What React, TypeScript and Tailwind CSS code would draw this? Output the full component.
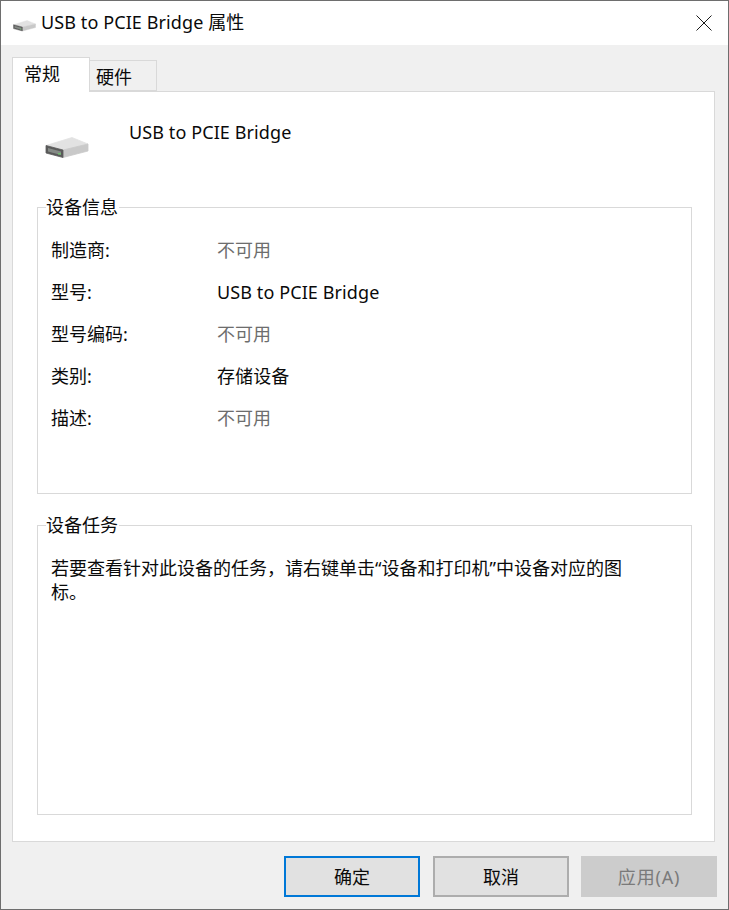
const font = { fontFamily: '"Noto Sans", "Noto Sans CJK SC", sans-serif' };

function DriveIcon({ className }: { className: string }) {
  return (
    <svg viewBox="0 0 44 22" className={className}>
      <path d="M1 8.5 L27 0.5 L43 7 L18 13 Z" fill="#e2e2e2" stroke="#e2e2e2" strokeWidth="0.8" strokeLinejoin="round" />
      <path d="M18 13 L43 7 L43 14 L18 20.5 Z" fill="#c9c9c9" stroke="#c9c9c9" strokeWidth="0.8" strokeLinejoin="round" />
      <path d="M1 8.5 L18 13 L18 20.5 L1 16 Z" fill="#5a5a5a" stroke="#5a5a5a" strokeWidth="0.8" strokeLinejoin="round" />
      <path d="M3 11 L16 14.5 L16 18 L3 14.5 Z" fill="#858a86" />
      <rect x="13" y="16" width="3" height="1.5" fill="#6fbf6f" />
    </svg>
  );
}

function GroupBox({
  title,
  className,
  children,
}: {
  title: string;
  className: string;
  children: React.ReactNode;
}) {
  return (
    <div className={`border border-[#d9d9d9] px-[13px] ${className}`}>
      <div className="-mt-[13px] -ml-[5px] w-fit bg-white pr-[1px] text-[18px] leading-[24px]">
        {title}
      </div>
      {children}
    </div>
  );
}

const rows = [
  { label: "制造商:", value: "不可用", muted: true },
  { label: "型号:", value: "USB to PCIE Bridge", muted: false },
  { label: "型号编码:", value: "不可用", muted: true },
  { label: "类别:", value: "存储设备", muted: false },
  { label: "描述:", value: "不可用", muted: true },
];

export default function App() {
  return (
    <div
      className="flex h-[910px] w-[729px] flex-col border border-[#6e6e6e] bg-[#f0f0f0] text-[#0a0a0a]"
      style={font}
    >
      {/* title bar */}
      <div className="flex h-[44px] shrink-0 items-center bg-white pl-[12px] pr-[16px]">
        <DriveIcon className="h-[12px] w-[23px] mt-[5px]" />
        <span className="ml-[5px] -mt-[3px] text-[18px] leading-[24px] tracking-[0.1px]">USB to PCIE Bridge 属性</span>
        <svg viewBox="0 0 16 16" className="ml-auto h-[16px] w-[16px] -mt-[1px]">
          <path d="M0.5 0.5 L15.5 15.5 M15.5 0.5 L0.5 15.5" stroke="#1a1a1a" strokeWidth="1" fill="none" />
        </svg>
      </div>

      {/* tabs */}
      <div className="mt-[12px] flex h-[34px] shrink-0 items-end pl-[11px]">
        <div className="relative z-10 -mb-[1px] h-[35px] w-[78px] border border-b-0 border-[#d9d9d9] bg-white pl-[11px] pt-[4px] text-[18px] leading-[24px]">
          常规
        </div>
        <div className="h-[31px] w-[67px] border border-l-0 border-[#d9d9d9] bg-[#f0f0f0] pl-[6px] pt-[4px] text-[18px] leading-[24px]">
          硬件
        </div>
      </div>

      {/* page */}
      <div className="ml-[11px] flex h-[751px] w-[703px] shrink-0 flex-col border border-[#d9d9d9] bg-white pl-[24px] pr-[22px]">
        <div className="flex h-[115px] shrink-0">
          <DriveIcon className="mt-[45px] ml-[8px] h-[22px] w-[44px] shrink-0" />
          <span className="ml-[40px] mt-[28px] text-[18px] leading-[24px] tracking-[0.1px]">USB to PCIE Bridge</span>
        </div>

        <GroupBox title="设备信息" className="h-[287px] shrink-0">
          <div className="mt-[10px] flex flex-col">
            {rows.map((row) => (
              <div key={row.label} className="flex h-[42px] items-center text-[18px]">
                <span className="w-[166px] shrink-0">{row.label}</span>
                <span className={row.muted ? "text-[#6d6d6d]" : "tracking-[0.1px]"}>{row.value}</span>
              </div>
            ))}
          </div>
        </GroupBox>

        <GroupBox title="设备任务" className="mt-[31px] h-[290px] shrink-0">
          <p className="mt-[19px] w-[580px] text-[18px] leading-[24px]">
            若要查看针对此设备的任务，请右键单击“设备和打印机”中设备对应的图标。
          </p>
        </GroupBox>
      </div>

      {/* footer */}
      <div className="mt-[14px] flex gap-[13px] pl-[283px]">
        <button className="h-[41px] w-[136px] border-2 border-[#0078d7] bg-[#e1e1e1] text-[18px] leading-[24px]">
          确定
        </button>
        <button className="h-[41px] w-[136px] border-2 border-[#adadad] bg-[#e1e1e1] text-[18px] leading-[24px]">
          取消
        </button>
        <button className="-ml-[1px] h-[41px] w-[136px] bg-[#cccccc] text-[18px] leading-[24px] tracking-[0.8px] text-[#7a7a7a]">
          应用(A)
        </button>
      </div>
    </div>
  );
}
